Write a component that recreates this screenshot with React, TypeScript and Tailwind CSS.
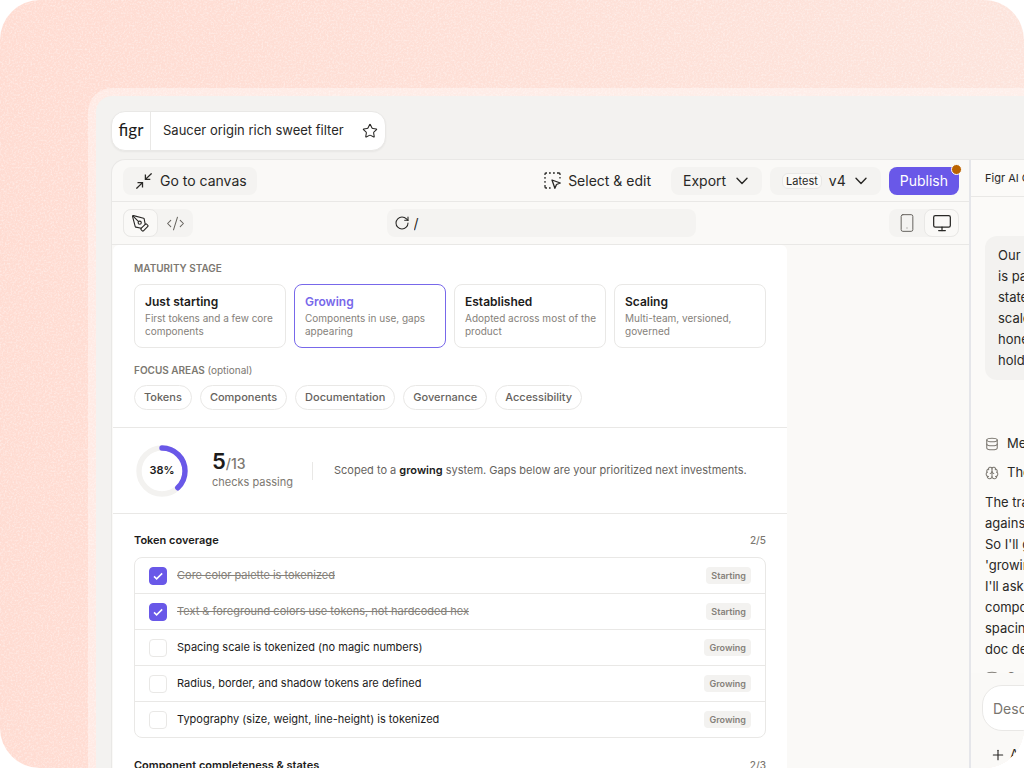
import React, { useState } from 'react';
import {
  Brain,
  CodeXml,
  Database,
  Monitor,
  PenTool,
  Plus,
  RotateCw,
  Smartphone,
  Star
} from 'lucide-react';

const stages = [
  { name: 'Just starting', text: 'First tokens and a few core components' },
  { name: 'Growing', text: 'Components in use, gaps appearing' },
  { name: 'Established', text: 'Adopted across most of the product' },
  { name: 'Scaling', text: 'Multi-team, versioned, governed' }
];

const focusAreas = ['Tokens', 'Components', 'Documentation', 'Governance', 'Accessibility'];

const initialChecks = [
  { label: 'Core color palette is tokenized', level: 'Starting', done: true },
  { label: 'Text & foreground colors use tokens, not hardcoded hex', level: 'Starting', done: true },
  { label: 'Spacing scale is tokenized (no magic numbers)', level: 'Growing', done: false },
  { label: 'Radius, border, and shadow tokens are defined', level: 'Growing', done: false },
  { label: 'Typography (size, weight, line-height) is tokenized', level: 'Growing', done: false }
];

const promptLines = ['Our', 'is part', 'state', 'scale', 'honest', 'hold'];
const replyLines = ['The tracker', 'against', "So I'll give", "'growing'", "I'll ask", 'component', 'spacing', 'doc debt'];

const Grain = () => (
  <svg className="absolute inset-0 h-full w-full opacity-40" aria-hidden="true">
    <filter id="grain">
      <feTurbulence type="fractalNoise" baseFrequency="0.55" numOctaves="2" />
      <feColorMatrix values="0 0 0 0 1  0 0 0 0 1  0 0 0 0 1  2.4 0 0 0 -1" />
    </filter>
    <rect width="100%" height="100%" filter="url(#grain)" />
  </svg>
);

const CollapseIcon = () => (
  <svg className="h-4 w-4" viewBox="0 0 16 16" fill="none" stroke="currentColor" strokeWidth="1.3">
    <path d="M15.6 .4 9.4 6.4M9.4 1.6v4.8h4.9M.4 15.6l6.1-6M1.5 9.6h5v4.9" />
  </svg>
);

const SelectIcon = () => (
  <svg className="h-[17px] w-[17px]" viewBox="0 0 17 17" fill="none" stroke="currentColor" strokeWidth="1.3" strokeLinejoin="round">
    <path d="M1 3V2a1 1 0 0 1 1-1h1M5 1h1.8M9 1h1.8M13 1h2a1 1 0 0 1 1 1v1M16 5v1.6M1 5v1.8M1 9v1.8M1 13v2a1 1 0 0 0 1 1h1M5 16h1.6" />
    <path d="m8 8 8.3 3-3.8 1.5-1.6 3.8z" />
  </svg>
);

const Chevron = () => (
  <svg className="mx-[2px] h-2 w-3" viewBox="0 0 12 8" fill="none" stroke="currentColor" strokeWidth="1.4" strokeLinecap="round" strokeLinejoin="round">
    <path d="m1 1.2 5 5.2 5-5.2" />
  </svg>
);

const ProgressRing = () => (
  <div className="relative flex h-14 w-14 items-center justify-center">
    <svg className="absolute inset-0 h-14 w-14 -rotate-90" viewBox="0 0 56 56" fill="none" strokeWidth="5.4">
      <circle cx="28" cy="28" r="23" stroke="#f3f2f0" />
      <circle cx="28" cy="28" r="23" stroke="#6958e8" strokeLinecap="round" pathLength="100" strokeDasharray="38 100" />
    </svg>
    <span className="relative text-[11px] font-semibold text-[#1c1b1a]">38%</span>
  </div>
);

const SectionTitle = ({ title, count }: { title: string; count: string }) => (
  <div className="flex h-4 items-center justify-between">
    <h2 className="text-[11px] font-semibold text-[#1c1b1a]">{title}</h2>
    <span className="text-[10px] font-medium text-[#7c7871]">{count}</span>
  </div>
);

const Toolbar = () => (
  <div className="flex h-[42px] items-center justify-between border-b border-[#e9e8e6] pr-[10px] pl-[11px] text-[14px]">
    <button className="flex h-7 items-center gap-2 rounded-lg bg-[#f4f3f1] pr-[10px] pl-[13px]">
      <CollapseIcon />
      Go to canvas
    </button>
    <div className="flex items-center gap-2">
      <button className="mr-3 flex items-center gap-[7px]">
        <SelectIcon />
        Select &amp; edit
      </button>
      <button className="flex h-7 items-center gap-2 rounded-lg bg-[#f4f3f1] px-3">
        Export
        <Chevron />
      </button>
      <button className="flex h-7 items-center gap-[7px] rounded-lg bg-[#f4f3f1] px-3">
        <span className="rounded-md border border-[#e9e8e6] bg-[#faf9f7] px-[3px] text-[11px] leading-[14px]">Latest</span>
        v4
        <Chevron />
      </button>
      <button className="relative h-7 rounded-lg bg-[#6958e8] px-[11px] text-white">
        Publish
        <span className="absolute -top-[3px] -right-[3px] h-[11px] w-[11px] rounded-full border border-white bg-[#bb6300]" />
      </button>
    </div>
  </div>
);

const ViewBar = () => (
  <div className="flex h-[43px] items-center justify-between border-b border-[#e9e8e6] pr-[10px] pl-[11px]">
    <div className="flex h-7 w-[70px] rounded-lg bg-[#f4f3f1]">
      <button aria-label="Design" className="flex h-7 w-[35px] items-center justify-center rounded-lg border border-[#e9e8e6] bg-[#faf9f7]">
        <PenTool className="h-[19px] w-[19px]" strokeWidth={1.4} />
      </button>
      <button aria-label="Code" className="flex h-7 w-[35px] items-center justify-center text-[#66635e]">
        <CodeXml className="h-[19px] w-[19px]" strokeWidth={1.3} />
      </button>
    </div>
    <div className="flex h-7 w-[309px] items-center gap-1 rounded-lg bg-[#f4f3f1] px-[7px]">
      <button aria-label="Reload">
        <RotateCw className="h-4 w-4" strokeWidth={1.6} />
      </button>
      <input aria-label="Path" defaultValue="/" className="w-full bg-transparent text-[14px] outline-none" />
    </div>
    <div className="flex h-7 w-[70px] rounded-lg bg-[#f4f3f1]">
      <button aria-label="Mobile" className="flex h-7 w-[35px] items-center justify-center text-[#66635e]">
        <Smartphone className="h-5 w-5" strokeWidth={1.2} />
      </button>
      <button aria-label="Desktop" className="flex h-7 w-[35px] items-center justify-center rounded-lg border border-[#e9e8e6] bg-[#faf9f7]">
        <Monitor className="h-5 w-5" strokeWidth={1.5} />
      </button>
    </div>
  </div>
);

const Tracker = () => {
  const [stage, setStage] = useState('Growing');
  const [checks, setChecks] = useState(initialChecks);

  const toggle = (index: number) => {
    setChecks(checks.map((c, i) => (i === index ? { ...c, done: !c.done } : c)));
  };

  return (
    <div className="ml-px w-full max-w-[674px] rounded-t-md bg-white">
      <section className="border-b border-[#e9e8e6] px-[21px] pt-[15px] pb-[17px]">
        <h2 className="text-[10px] leading-4 font-semibold text-[#7c7871]">MATURITY STAGE</h2>
        <div className="mt-2 grid grid-cols-4 gap-2">
          {stages.map((s) => (
            <button
              key={s.name}
              onClick={() => setStage(s.name)}
              className={`rounded-lg border pt-[9px] pr-1 pb-[9px] pl-[10px] text-left ${
                stage === s.name ? 'border-[#7868ea]' : 'border-[#e9e8e6]'
              }`}
            >
              <span className={`block text-[12px] leading-4 font-semibold ${stage === s.name ? 'text-[#7868ea]' : 'text-[#1c1b1a]'}`}>
                {s.name}
              </span>
              <span className="mt-[2px] block text-[10px] leading-[13px] text-[#85817a]">{s.text}</span>
            </button>
          ))}
        </div>
        <h2 className="mt-[14px] text-[10px] leading-4 font-semibold text-[#7c7871]">
          FOCUS AREAS <span className="font-normal">(optional)</span>
        </h2>
        <div className="mt-[7px] flex flex-wrap gap-2">
          {focusAreas.map((area) => (
            <button key={area} className="h-[25px] rounded-full border border-[#e9e8e6] px-[9px] text-[11px] font-medium text-[#66635e]">
              {area}
            </button>
          ))}
        </div>
      </section>

      <section className="flex h-[86px] items-center border-b border-[#e9e8e6] px-[21px]">
        <ProgressRing />
        <div className="ml-[22px]">
          <div className="text-[14px] leading-5 font-medium text-[#7c7871]">
            <span className="text-[22px] font-semibold text-[#1c1b1a]">5</span>/13
          </div>
          <div className="text-[11px] leading-4 text-[#7c7871]">checks passing</div>
        </div>
        <div className="mr-[21px] ml-[19px] h-[18px] w-px bg-[#e9e8e6]" />
        <p className="text-[11px] text-[#66635e]">
          Scoped to a <strong className="font-semibold text-[#1c1b1a]">growing</strong> system. Gaps below are your prioritized next investments.
        </p>
      </section>

      <section className="px-[21px] pt-[18px]">
        <SectionTitle title="Token coverage" count="2/5" />
        <ul className="mt-[9px] rounded-lg border border-[#e9e8e6]">
          {checks.map((check, i) => (
            <li key={check.label} className="border-b border-[#e9e8e6] last:border-b-0">
              <label className="flex h-[35px] items-center px-[14px] text-[11px]">
                <span className="relative mr-[10px] flex">
                  <input
                    type="checkbox"
                    checked={check.done}
                    onChange={() => toggle(i)}
                    className="h-[18px] w-[18px] appearance-none rounded-[4px] border border-[#e9e8e6] bg-white checked:border-[#6958e8] checked:bg-[#6958e8]"
                  />
                  {check.done && (
                    <svg className="pointer-events-none absolute inset-0 h-[18px] w-[18px]" viewBox="0 0 18 18" fill="none" stroke="white" strokeWidth="1.5">
                      <path d="m5 9.4 2.6 2.5L13.2 6.4" />
                    </svg>
                  )}
                </span>
                <span className={`flex-1 ${check.done ? 'text-[#85817a] line-through' : 'text-[#1c1b1a]'}`}>{check.label}</span>
                <span className="rounded-[4px] bg-[#f3f2f0] px-[5px] text-[9px] leading-[17px] font-semibold text-[#85817a]">{check.level}</span>
              </label>
            </li>
          ))}
        </ul>
        <div className="mt-[19px]">
          <SectionTitle title="Component completeness & states" count="2/3" />
        </div>
      </section>
    </div>
  );
};

const ChatPanel = () => (
  <aside className="flex w-[295px] shrink-0 flex-col border-l-2 border-[#e5e6ea] bg-[#fbfaf8] text-[13px] whitespace-nowrap">
    <div className="flex h-[37px] shrink-0 items-center border-b border-[#e9e8e6] px-[14px] text-[11px]">Figr AI Chat</div>
    <div className="min-h-0 flex-1 overflow-hidden px-[14px] pt-[39px]">
      <div className="rounded-xl bg-[#f3f2f0] px-[13px] py-[9px] leading-[21px]">
        {promptLines.map((line) => (
          <p key={line}>{line}</p>
        ))}
      </div>
      <div className="mt-[54px] flex h-5 items-center gap-2">
        <Database className="h-[14px] w-[14px] text-[#7c7871]" strokeWidth={1.8} />
        Memory
      </div>
      <div className="mt-[9px] flex h-5 items-center gap-2">
        <Brain className="h-[14px] w-[14px] text-[#7c7871]" strokeWidth={1.8} />
        Thought
      </div>
      <div className="mt-[9px] leading-[21px]">
        {replyLines.map((line) => (
          <p key={line}>{line}</p>
        ))}
      </div>
      <div className="mt-2 flex items-center gap-2 text-[#7c7871]">
        <Database className="h-[14px] w-[14px]" strokeWidth={1.8} />
        Saved
      </div>
    </div>
    <div className="shrink-0 bg-[#faf9f7] px-[11px] pt-3">
      <input
        aria-label="Message"
        placeholder="Describe"
        className="h-[46px] w-full rounded-[20px] border border-[#e9e8e6] bg-white px-[10px] text-[14px] outline-none placeholder:text-[#78756f]"
      />
      <button className="flex h-[37px] w-full items-center gap-1 px-2 pt-[10px]">
        <Plus className="h-4 w-4" strokeWidth={1.7} />
        Add
      </button>
    </div>
  </aside>
);

export default function App() {
  return (
    <div className="h-screen bg-white font-['Inter',sans-serif] text-[#292826]">
      <div className="relative h-full overflow-hidden rounded-[40px] bg-linear-to-r from-[#ffdcd2] to-[#fde4dc] pt-[88px] pl-[88px]">
        <Grain />
        {/* the window runs off the right edge, so the chat panel is only partly in view */}
        <div className="relative -mr-60 flex h-full flex-col rounded-tl-3xl bg-white/40 pt-2 pl-2">
          <div className="flex min-h-0 flex-1 flex-col rounded-tl-2xl bg-[#f3f2f0] pt-[15px] pl-[15px]">
            <header className="flex h-10 items-center self-start rounded-[14px] border border-[#e9e8e6] bg-white shadow-xs">
              <a href="#home" className="flex h-full w-[39px] items-center justify-center border-r border-[#e9e8e6] pb-[3px] font-['Lato',sans-serif] text-[17px] text-[#1c1b1a]">
                figr
              </a>
              <h1 className="pr-[18px] pb-px pl-3 text-[13px]">Saucer origin rich sweet filter</h1>
              <button aria-label="Favorite" className="pr-[7px] pb-px">
                <Star className="h-4 w-4" strokeWidth={1.6} />
              </button>
            </header>
            <div className="mt-2 flex min-h-0 flex-1 overflow-hidden rounded-tl-[14px] border-t border-l border-[#e9e8e6] bg-[#faf9f7]">
              <main className="min-w-0 flex-1 overflow-hidden">
                <Toolbar />
                <ViewBar />
                <Tracker />
              </main>
              <ChatPanel />
            </div>
          </div>
        </div>
      </div>
    </div>
  );
}
